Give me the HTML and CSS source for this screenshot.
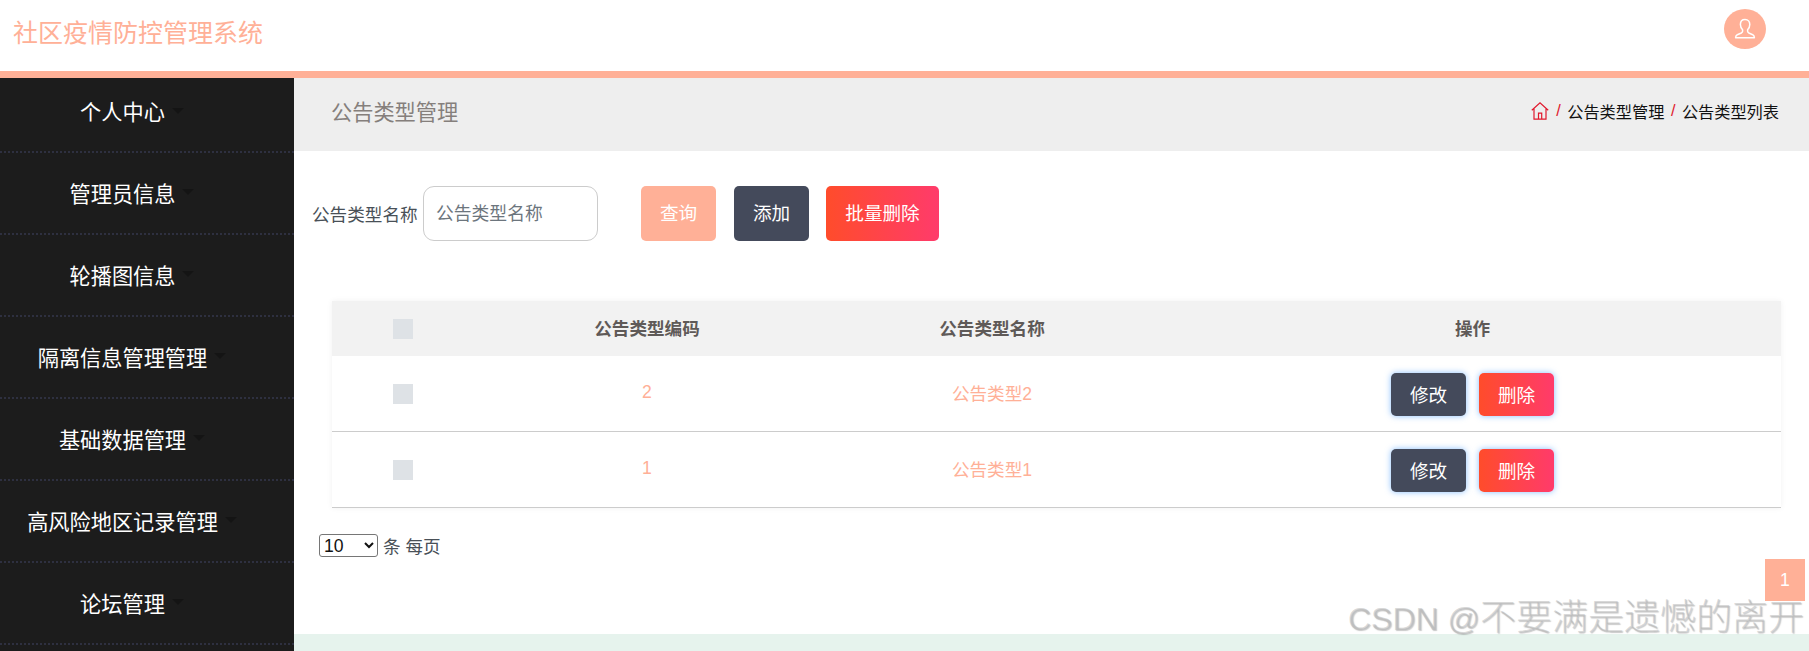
FILE: index.html
```html
<!DOCTYPE html>
<html lang="zh-CN">
<head>
<meta charset="utf-8">
<title>社区疫情防控管理系统</title>
<link rel="stylesheet" href="styles.css">
</head>
<body>
<header class="topbar">
  <div class="brand">社区疫情防控管理系统</div>
  <div class="avatar">
    <svg width="22" height="22" viewBox="0 0 22 22" fill="none" stroke="#fff" stroke-width="1.5" stroke-linejoin="round"><path d="M11 1.500c-3 0-4.600 2.200-4.600 5 0 2.200 1 4 2.200 5.200v1.600c0 .8-.5 1.300-1.300 1.700L3.300 16.700C2.200 17.300 1.600 18.200 1.600 19.800h18.800c0-1.600-.6-2.500-1.700-3.100l-3.800-1.700c-.8-.4-1.300-.9-1.300-1.700v-1.600c1.200-1.200 2.200-3 2.200-5.200 0-2.800-1.600-5-4.800-5z"/></svg>
  </div>
</header>
<div class="layout">
  <nav class="sidebar">
    <a class="side-item"><span>个人中心</span><i class="caret"></i></a>
    <a class="side-item"><span>管理员信息</span><i class="caret"></i></a>
    <a class="side-item"><span>轮播图信息</span><i class="caret"></i></a>
    <a class="side-item"><span>隔离信息管理管理</span><i class="caret"></i></a>
    <a class="side-item"><span>基础数据管理</span><i class="caret"></i></a>
    <a class="side-item"><span>高风险地区记录管理</span><i class="caret"></i></a>
    <a class="side-item"><span>论坛管理</span><i class="caret"></i></a>
  </nav>
  <main class="main">
    <div class="titlebar">
      <h1 class="page-title">公告类型管理</h1>
      <div class="crumbs">
        <svg class="home" width="18" height="18" viewBox="0 0 18 18" fill="none" stroke="#e0182d" stroke-width="1.200"><path d="M.8 8.300 9 .9l8.200 7.400M3 6.800v10.400h12V6.800M7.500 17.200v-6h3.200v6"/></svg>
        <span class="sep">/</span><span>公告类型管理</span><span class="sep">/</span><span>公告类型列表</span>
      </div>
    </div>
    <section class="content">
      <form class="search">
        <label class="search-label">公告类型名称</label>
        <input class="search-input" type="text" placeholder="公告类型名称">
        <button type="button" class="btn btn-peach btn-query">查询</button>
        <button type="button" class="btn btn-slate">添加</button>
        <button type="button" class="btn btn-red">批量删除</button>
      </form>
      <table class="grid">
        <colgroup><col class="c1"><col class="c2"><col class="c3"><col class="c4"></colgroup>
        <thead>
          <tr><th><i class="check"></i></th><th>公告类型编码</th><th>公告类型名称</th><th>操作</th></tr>
        </thead>
        <tbody>
          <tr>
            <td><i class="check"></i></td><td>2</td><td>公告类型2</td>
            <td><div class="ops"><button type="button" class="btn btn-slate glow">修改</button><button type="button" class="btn btn-red glow">删除</button></div></td>
          </tr>
          <tr>
            <td><i class="check"></i></td><td>1</td><td>公告类型1</td>
            <td><div class="ops"><button type="button" class="btn btn-slate glow">修改</button><button type="button" class="btn btn-red glow">删除</button></div></td>
          </tr>
        </tbody>
      </table>
      <div class="length"><select class="length-select"><option>10</option><option>20</option><option>50</option></select> 条 每页</div>
      <div class="pager"><span class="page-num">1</span></div>
    </section>
    <footer class="foot"></footer>
  </main>
</div>
<div class="watermark"><span class="wm-latin">CSDN @</span>不要满是遗憾的离开</div>
</body>
</html>
```
FILE: styles.css
```css
* { box-sizing: border-box; }
html, body { margin: 0; height: 651px; overflow: hidden; background: #fff; }
body { font-family: "Liberation Sans", "Noto Sans CJK SC", sans-serif; font-size: 17.6px; color: #495057; }

.topbar { height: 78px; border-bottom: 7px solid #ffb097; display: flex; align-items: center; justify-content: space-between; padding: 0 43px 2px 13px; background: #fff; }
.brand { font-size: 25px; color: #ffb097; font-weight: 400; line-height: 1; margin-top: -2px; }
.avatar { width: 42px; height: 40px; margin-top: -11px; border-radius: 50%; background: #ffb097; display: flex; align-items: center; justify-content: center; }

.layout { display: flex; height: 573px; }
.sidebar { width: 294px; flex: none; background: #1c1c1c; overflow: hidden; }
.side-item { height: 82px; display: flex; align-items: center; justify-content: center; gap: 7px; padding: 0 30px 2px 0; color: #fff; font-size: 21.2px; border-bottom: 2px dotted #2e3040; }
.side-item:first-child { height: 75px; padding-bottom: 8px; }
.caret { width: 0; height: 0; border-left: 6px solid transparent; border-right: 6px solid transparent; border-top: 6px solid #141414; }

.main { flex: 1; display: flex; flex-direction: column; min-width: 0; }
.titlebar { height: 73px; background: #eee; display: flex; align-items: center; justify-content: space-between; padding: 0 30px 8px 37px; flex: none; }
.page-title { margin: 0; font-size: 21.2px; font-weight: 400; color: #857f7c; }
.crumbs { display: flex; align-items: center; font-size: 16.2px; color: #111; }
.home { margin-right: 7.5px; }
.sep { color: #e0182d; margin: 0 6.5px 0 0; }
.crumbs span + .sep { margin-left: 6.5px; }

.content { flex: 1; padding: 0 4px 0 18px; position: relative; }
.search { display: flex; align-items: center; height: 55px; margin-top: 35px; }
.search-label { font-size: 17.6px; margin-right: 6px; width: 105px; white-space: nowrap; }
.search-input { width: 175px; height: 55px; border: 1px solid #ccc; border-radius: 11px; padding: 1px 12px 0; font: inherit; font-size: 17.8px; outline: none; }
.search-input::placeholder { color: #6c757d; opacity: 1; }
.btn { width: 75px; height: 55px; border: 0; border-radius: 5px; color: #fff; font-family: inherit; font-size: 18.6px; padding: 0 0 2px; }
.search .btn { padding-bottom: 4px; }
.btn-peach { background: #ffb097; }
.btn-slate { background: #444a5b; }
.btn-red { background: linear-gradient(90deg, #ff4c2b, #ff3b6b); }
.btn-query { margin-left: 43px; }
.search .btn-slate { margin-left: 18px; }
.search .btn-red { width: 113px; margin-left: 17px; }

.grid { width: 1449px; margin: 60px 0 0 20px; border-collapse: separate; border-spacing: 0; table-layout: fixed; box-shadow: 0 0 6px rgba(0,0,0,.06); }
.c1 { width: 142px; }
.c2 { width: 346px; }
.c3 { width: 344px; }
.grid th { height: 55px; background: #f2f2f2; color: #5f5a58; font-size: 17.6px; font-weight: 700; text-align: center; padding: 0 0 2px; }
.grid th .check { margin-top: 2px; }
.grid td { height: 76px; border-bottom: 1px solid #ccc; color: #ffb097; font-size: 17.6px; text-align: center; padding: 0 0 2px; }
.check { display: inline-block; width: 20px; height: 20px; background: #dee2e6; vertical-align: middle; }
.grid td .check { margin-top: 3px; }
.ops { display: flex; justify-content: center; gap: 13px; margin-top: 4px; }
.ops .btn { height: 43px; }
.glow { box-shadow: 0 0 6px rgba(60,150,255,.6); }

.length { margin: 25px 0 0 7px; height: 24px; display: flex; align-items: center; gap: 5px; color: #495057; }
.length-select { width: 59px; height: 23px; font-family: inherit; font-size: 17.6px; background: #fff; color: #111; border: 1px solid #767676; border-radius: 3px; }
.pager { display: flex; justify-content: flex-end; margin-top: 2px; }
.page-num { width: 40px; height: 42px; background: #ffb097; color: #fff; font-size: 17.6px; display: flex; align-items: center; justify-content: center; }

.foot { height: 17px; flex: none; background: #e6f3ed; }
.watermark { position: absolute; right: 5px; top: 595px; font-size: 36px; font-weight: 300; line-height: 46px; color: rgba(175,175,175,.45); text-shadow: 1px 1px 1px rgba(120,120,120,.4); white-space: nowrap; }
.wm-latin { font-size: 32px; }
```
